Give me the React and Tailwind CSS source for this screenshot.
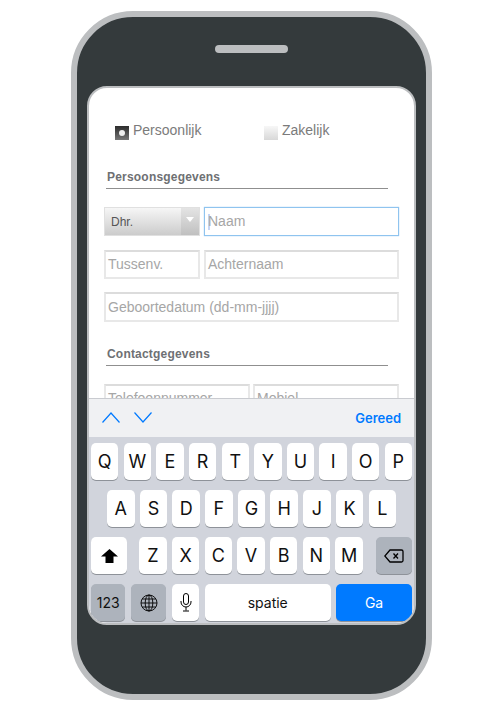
const rows = ["QWERTYUIOP", "ASDFGHJKL", "ZXCVBNM"];

function Key({ children, className = "" }) {
  return (
    <div className={`h-[37px] rounded-[5px] bg-white shadow-[0_1px_0_#8e9299] flex items-center justify-center text-[#111111] ${className}`}>
      {children}
    </div>
  );
}

function Field({ placeholder, className = "" }) {
  return (
    <div className={`h-[29px] border-2 border-[#e8e8e8] border-t-[#dcdcdc] bg-white flex items-center pl-[2px] text-[14px] text-[#a6a6a6] whitespace-nowrap ${className}`}>
      {placeholder}
    </div>
  );
}

function Heading({ children }) {
  return (
    <div className="ml-[17px] w-[282px] border-b border-[#8f8f8f] h-[21px] pt-[1px] pl-[1px] text-[12px] leading-[16px] font-bold text-[#6e7073] tracking-[0.2px]">
      {children}
    </div>
  );
}

export default function App() {
  return (
    <div className="w-[500px] h-[708px] bg-white pt-[11px] pl-[71px] overflow-hidden" style={{ fontFamily: '"Liberation Sans", sans-serif' }}>
      <div className="w-[361px] h-[689px] rounded-[62px] border-[6px] border-[#bcbec0] bg-[#343a3c] flex flex-col items-center">
        <div className="mt-[28px] w-[73px] h-[8px] rounded-full bg-[#bcbec0] shrink-0" />
        <div className="mt-[33px] w-[329px] h-[539px] rounded-[20px] border-2 border-[#bcbec0] bg-white overflow-hidden flex flex-col shrink-0">
          <div className="h-[310px] overflow-hidden shrink-0">
            <div className="flex pt-[34px] h-[80px]">
              <div className="ml-[26px] w-[149px] flex items-start">
                <div className="mt-[4px] w-[14px] h-[14px] bg-gradient-to-b from-[#2c2c2c] to-[#777777] flex items-center justify-center">
                  <div className="w-[6px] h-[6px] rounded-full bg-[#eeeeee]" />
                </div>
                <span className="ml-[4px] text-[14px] leading-[16px] text-[#7b7b7b]">Persoonlijk</span>
              </div>
              <div className="flex items-start">
                <div className="mt-[4px] w-[14px] h-[14px] bg-gradient-to-b from-[#f7f7f7] to-[#d8d8d8]" />
                <span className="ml-[4px] text-[14px] leading-[16px] text-[#7b7b7b]">Zakelijk</span>
              </div>
            </div>
            <Heading>Persoonsgegevens</Heading>
            <div className="mt-[18px] ml-[15px] flex gap-[4px]">
              <div className="w-[96px] h-[29px] border border-[#e0e0e0] bg-gradient-to-b from-[#f6f6f6] to-[#cccccc] flex items-center justify-between">
                <span className="ml-[6px] text-[12px] text-[#555555]">Dhr.</span>
                <div className="w-[18px] h-full bg-gradient-to-b from-[#e4e4e4] to-[#c0c0c0] flex justify-center pt-[9px]">
                  <div className="w-0 h-0 border-l-[4px] border-r-[4px] border-t-[5px] border-l-transparent border-r-transparent border-t-white" />
                </div>
              </div>
              <div className="w-[195px] h-[29px] border border-[#8fc4ef] shadow-[0_0_1px_#8fc4ef] bg-white flex items-center pl-[3px] text-[14px] text-[#a6a6a6]">
                <div className="w-[2px] h-[16px] bg-[#c5d5f5]" />
                <span className="-ml-[2px]">Naam</span>
              </div>
            </div>
            <div className="mt-[14px] ml-[15px] flex gap-[4px]">
              <Field placeholder="Tussenv." className="w-[96px]" />
              <Field placeholder="Achternaam" className="w-[195px]" />
            </div>
            <div className="mt-[13px] ml-[15px]">
              <Field placeholder="Geboortedatum (dd-mm-jjjj)" className="w-[295px] h-[30px]" />
            </div>
            <div className="mt-[23px]">
              <Heading>Contactgegevens</Heading>
            </div>
            <div className="mt-[18px] ml-[15px] flex gap-[3px]">
              <Field placeholder="Telefoonnummer" className="w-[146px]" />
              <Field placeholder="Mobiel" className="w-[146px]" />
            </div>
          </div>
          <div className="h-[39px] shrink-0 bg-[#f0f1f3] border-t border-[#c9cbd0] flex items-center pl-[13px] pr-[13px]" style={{ fontFamily: "Inter, sans-serif" }}>
            <svg className="-mt-[1px]" width="18" height="11" viewBox="0 0 18 11" fill="none" stroke="#007aff" strokeWidth="1.2"><path d="M0.5 10.5 L9 1 L17.5 10.5" /></svg>
            <svg className="ml-[14px] -mt-[1px]" width="18" height="11" viewBox="0 0 18 11" fill="none" stroke="#007aff" strokeWidth="1.2"><path d="M0.5 0.5 L9 10 L17.5 0.5" /></svg>
            <span className="ml-auto pt-[1px] text-[13px] font-semibold text-[#007aff]">Gereed</span>
          </div>
          <div className="flex-1 bg-[#d1d4dc] pt-[6px] px-[2px] flex flex-col gap-[10px] text-[18px] rounded-b-[18px]" style={{ fontFamily: "Inter, sans-serif" }}>
            <div className="flex gap-[5.2px]">
              {rows[0].split("").map((k) => <Key key={k} className="w-[27.5px]">{k}</Key>)}
            </div>
            <div className="flex gap-[5.2px] pl-[16px]">
              {rows[1].split("").map((k) => <Key key={k} className="w-[27.5px]">{k}</Key>)}
            </div>
            <div className="flex">
              <Key className="w-[36.5px]">
                <svg width="17" height="14" viewBox="0 0 17 14" fill="black"><path d="M8.5 0 L17 7.5 H12.5 V14 H4.5 V7.5 H0 Z" /></svg>
              </Key>
              <div className="ml-[12px] flex gap-[5.2px]">
                {rows[2].split("").map((k) => <Key key={k} className="w-[27.5px]">{k}</Key>)}
              </div>
              <Key className="ml-[13px] w-[36.5px] !bg-[#adb3bc]">
                <svg width="20" height="14" viewBox="0 0 20 14" fill="none" stroke="black" strokeWidth="1.3"><path d="M6 1 H17.5 A1.5 1.5 0 0 1 19 2.5 V11.5 A1.5 1.5 0 0 1 17.5 13 H6 L0.8 7 Z" /><path d="M9.5 4.5 L14 9.5 M14 4.5 L9.5 9.5" /></svg>
              </Key>
            </div>
            <div className="flex gap-[5.5px] text-[14px]">
              <Key className="w-[34.5px] !bg-[#adb3bc]">123</Key>
              <Key className="w-[35.5px] !bg-[#adb3bc]">
                <svg width="18" height="18" viewBox="0 0 18 18" fill="none" stroke="black" strokeWidth="0.9"><circle cx="9" cy="9" r="8" /><ellipse cx="9" cy="9" rx="3.8" ry="8" /><path d="M9 1 V17 M1 9 H17 M2.2 5 H15.8 M2.2 13 H15.8" /></svg>
              </Key>
              <Key className="w-[27.5px]">
                <svg width="12" height="19" viewBox="0 0 12 19" fill="none" stroke="black" strokeWidth="1"><rect x="3.5" y="0.5" width="5" height="11" rx="2.5" /><path d="M1 8 V9 A5 5 0 0 0 11 9 V8 M6 14 V17.5 M3 18 H9" /></svg>
              </Key>
              <Key className="w-[126px]">spatie</Key>
              <Key className="w-[76px] !bg-[#007aff] !text-white">Ga</Key>
            </div>
          </div>
        </div>
      </div>
    </div>
  );
}
